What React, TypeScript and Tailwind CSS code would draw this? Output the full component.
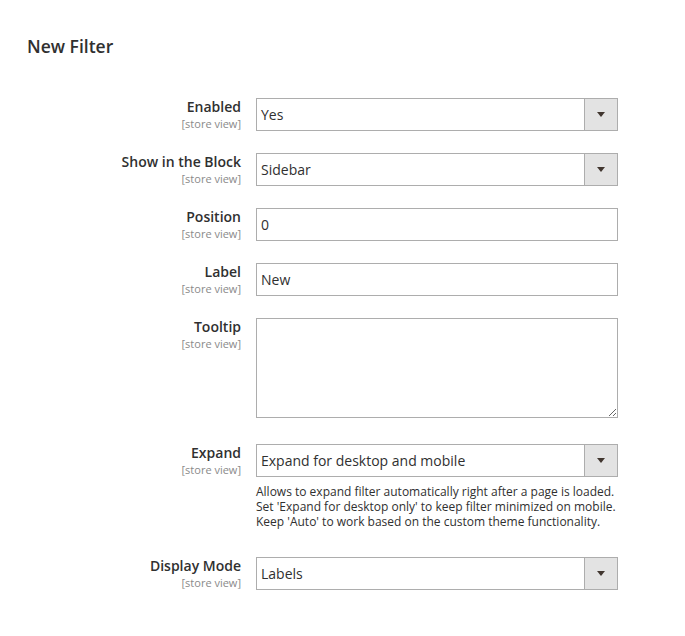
import React from 'react';

const font = { fontFamily: '"Open Sans", "Liberation Sans", sans-serif' };

const Label: React.FC<{ text: string }> = ({ text }) => (
  <div className="w-[214px] shrink-0 text-right">
    <div className="text-[14px] leading-[18px] font-semibold text-[#303030]">{text}</div>
    <div className="text-[11px] leading-[13px] text-[#8a8a8a] mt-px">[store view]</div>
  </div>
);

const Select: React.FC<{ value: string }> = ({ value }) => (
  <div className="w-[362px] h-[33px] border border-[#adadad] bg-white flex items-stretch">
    <div className="flex-1 flex items-center pl-[4px] text-[14px] text-[#303030]">{value}</div>
    <div className="w-[33px] bg-[#e3e3e3] border-l border-[#adadad] flex items-center justify-center">
      <svg width="8" height="5" viewBox="0 0 8 5">
        <path d="M0 0 L8 0 L4 5 Z" fill="#41362f" />
      </svg>
    </div>
  </div>
);

const Input: React.FC<{ value: string }> = ({ value }) => (
  <div className="w-[362px] h-[33px] border border-[#adadad] bg-white flex items-center pl-[4px] text-[14px] text-[#303030]">
    {value}
  </div>
);

export default function App() {
  return (
    <div className="w-[685px] h-[636px] bg-white pl-[27px]" style={font}>
      <h2 className="pt-[34px] text-[17.5px] leading-[24px] font-semibold text-[#303030]">New Filter</h2>

      <div className="mt-[40px] flex flex-col">
        <div className="flex gap-[15px]">
          <Label text="Enabled" />
          <Select value="Yes" />
        </div>
        <div className="flex gap-[15px] mt-[22px]">
          <Label text="Show in the Block" />
          <Select value="Sidebar" />
        </div>
        <div className="flex gap-[15px] mt-[22px]">
          <Label text="Position" />
          <Input value="0" />
        </div>
        <div className="flex gap-[15px] mt-[22px]">
          <Label text="Label" />
          <Input value="New" />
        </div>
        <div className="flex gap-[15px] mt-[22px]">
          <Label text="Tooltip" />
          <textarea
            className="w-[362px] h-[100px] border border-[#adadad] bg-white block resize"
            defaultValue=""
          />
        </div>
        <div className="flex gap-[15px] mt-[26px]">
          <Label text="Expand" />
          <div>
            <Select value="Expand for desktop and mobile" />
            <div className="mt-[7px] text-[12px] leading-[15px] text-[#303030]">
              <p>Allows to expand filter automatically right after a page is loaded.</p>
              <p>Set 'Expand for desktop only' to keep filter minimized on mobile.</p>
              <p>Keep 'Auto' to work based on the custom theme functionality.</p>
            </div>
          </div>
        </div>
        <div className="flex gap-[15px] mt-[28px]">
          <Label text="Display Mode" />
          <Select value="Labels" />
        </div>
      </div>
    </div>
  );
}
